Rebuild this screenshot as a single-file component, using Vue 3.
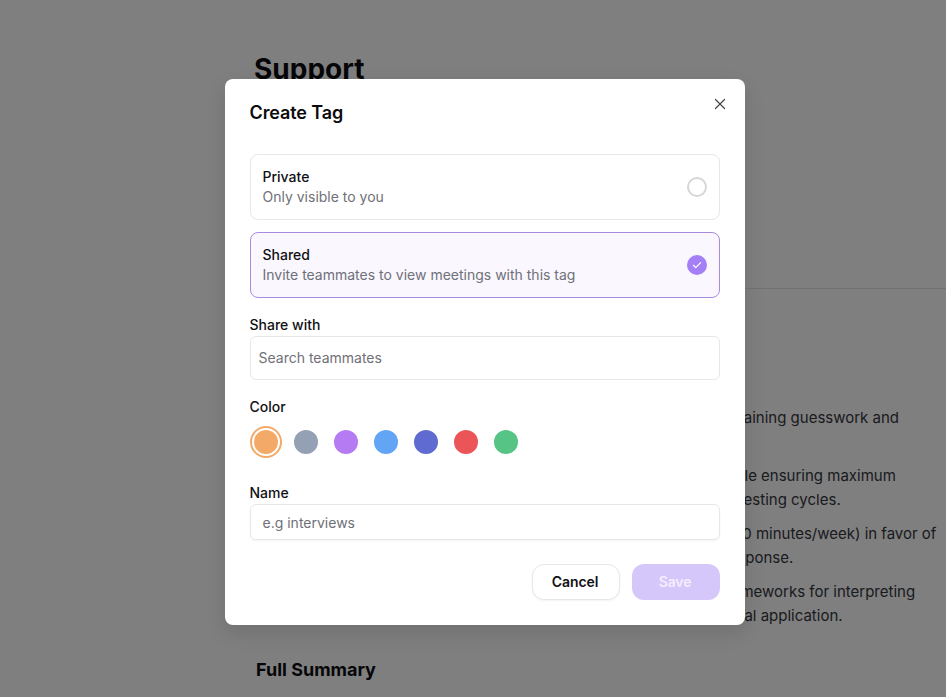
<script setup>
const options = [
  { title: 'Private', desc: 'Only visible to you', selected: false },
  { title: 'Shared', desc: 'Invite teammates to view meetings with this tag', selected: true },
]
const colors = ['#f3aa68', '#94a0b4', '#b57bf3', '#62a5f5', '#5f6bd0', '#ec5558', '#55c484']
const bullets = [
  ['Define the hiring criteria before the first interview starts, so constraining guesswork and'],
  ['Shorten each stage of the interview process for all candidates while ensuring maximum', 'signal for the entire team, and so avoid repeating long and costly testing cycles.'],
  ['Reduce the time that engineers spend on screening calls (under 30 minutes/week) in favor of', 'async reviews of written work by the whole panel, and a faster response.'],
  ['Give the interviewers a shared set of clear scoring rubrics and frameworks for interpreting', 'the results of every specific interview round, with notes on practical application.'],
]
</script>

<template>
  <div class="page">
    <h1 class="page-title">Support</h1>
    <hr class="rule" />
    <ul class="bullets">
      <li v-for="(b, i) in bullets" :key="i">
        <div v-for="(l, j) in b" :key="j" class="line">{{ l }}</div>
      </li>
    </ul>
    <h2 class="summary">Full Summary</h2>
  </div>

  <div class="overlay">
    <div class="modal">
      <button class="close" aria-label="Close">
        <svg width="16" height="16" viewBox="0 0 16 16" fill="none" stroke="#444" stroke-width="1.2" stroke-linecap="round">
          <path d="M3.5 3.5 12.5 12.5M12.5 3.5 3.5 12.5" />
        </svg>
      </button>
      <h3 class="title">Create Tag</h3>

      <div class="options">
        <div v-for="o in options" :key="o.title" class="option" :class="{ selected: o.selected }">
          <div class="option-text">
            <div class="option-title">{{ o.title }}</div>
            <div class="option-desc">{{ o.desc }}</div>
          </div>
          <span v-if="o.selected" class="radio on">
            <svg width="12" height="12" viewBox="0 0 12 12" fill="none" stroke="#fff" stroke-width="1.2" stroke-linecap="round" stroke-linejoin="round">
              <path d="M2.4 6.3 4.8 8.6 9.6 3.6" />
            </svg>
          </span>
          <span v-else class="radio"></span>
        </div>
      </div>

      <div class="label share-label">Share with</div>
      <div class="input search">Search teammates</div>

      <div class="label color-label">Color</div>
      <div class="swatches">
        <span v-for="(c, i) in colors" :key="c" class="swatch" :class="{ active: i === 0 }" :style="{ color: c }">
          <span class="dot"></span>
        </span>
      </div>

      <div class="label name-label">Name</div>
      <div class="input name">e.g interviews</div>

      <div class="actions">
        <button class="btn cancel">Cancel</button>
        <button class="btn save">Save</button>
      </div>
    </div>
  </div>
</template>

<style>
html, body { margin: 0; height: 100%; overflow: hidden; background: #fff; }
</style>

<style scoped>
.page {
  height: 697px;
  box-sizing: border-box;
  overflow: hidden;
  font-family: Inter, "Noto Sans", sans-serif;
  color: #1b1c20;
  padding-top: 52px;
}
.page-title {
  margin: 0 0 0 254px;
  font-size: 28px;
  line-height: 34px;
  font-weight: 700;
  color: #0c0d10;
}
.rule {
  border: 0;
  border-top: 1px solid #e4e4e7;
  margin: 202px 0 0 254px;
}
.bullets {
  list-style: none;
  margin: 117px 0 0 0;
  padding: 0 0 0 276px;
  font-size: 15px;
  line-height: 24px;
  color: #35363c;
  white-space: nowrap;
}
.bullets li { margin-bottom: 10px; }
.bullets li:first-child { margin-bottom: 34px; }
.summary {
  margin: 28px 0 0 256px;
  font-size: 18px;
  line-height: 28px;
  font-weight: 700;
  color: #0c0d10;
}
.overlay {
  position: absolute;
  inset: 0;
  background: rgba(0, 0, 0, 0.5);
  font-family: Inter, "Noto Sans", sans-serif;
}
.modal {
  position: absolute;
  left: 225px;
  top: 79px;
  width: 520px;
  height: 546px;
  box-sizing: border-box;
  padding: 22px 25px 25px;
  background: #fff;
  border-radius: 8px;
  box-shadow: 0 8px 20px rgba(0, 0, 0, 0.12);
}
.close {
  position: absolute;
  top: 17px;
  right: 17px;
  width: 16px;
  height: 16px;
  padding: 0;
  border: 0;
  background: none;
  display: flex;
}
.title {
  margin: 0 0 0 -0.5px;
  font-size: 18px;
  line-height: 24px;
  font-weight: 600;
  letter-spacing: -0.1px;
  color: #0b0b0d;
}
.options {
  display: flex;
  flex-direction: column;
  gap: 12px;
  margin-top: 29px;
}
.option {
  height: 66px;
  box-sizing: border-box;
  display: flex;
  align-items: center;
  justify-content: space-between;
  padding: 0 12px 0 11.5px;
  border: 1px solid #e7e7ea;
  border-radius: 8px;
}
.option.selected {
  background: #faf7ff;
  border-color: #a78bdc;
}
.option-title {
  font-size: 14px;
  line-height: 20px;
  font-weight: 500;
  color: #111114;
}
.option-desc {
  font-size: 14px;
  line-height: 20px;
  color: #6f7078;
}
.radio {
  width: 20px;
  height: 20px;
  box-sizing: border-box;
  border-radius: 50%;
  border: 2px solid #d6d6d8;
  display: flex;
  align-items: center;
  justify-content: center;
}
.radio.on {
  border: 0;
  background: #a47ff5;
}
.label {
  margin-left: -0.5px;
  font-size: 14px;
  line-height: 20px;
  font-weight: 500;
  color: #111114;
}
.share-label { margin-top: 17px; }
.input {
  box-sizing: border-box;
  margin-top: 1px;
  display: flex;
  align-items: center;
  border: 1px solid #e7e7ea;
  border-radius: 6px;
  font-size: 14px;
  color: #6f7078;
}
.search { height: 44px; padding: 0 0 2px 7.5px; margin-top: 1px; }
.color-label { margin-top: 17px; }
.swatches {
  display: flex;
  gap: 8px;
  margin-top: 9px;
}
.swatch {
  width: 32px;
  height: 32px;
  box-sizing: border-box;
  border-radius: 50%;
  display: flex;
  align-items: center;
  justify-content: center;
}
.swatch.active { border: 2px solid currentColor; }
.dot {
  width: 24px;
  height: 24px;
  border-radius: 50%;
  background: currentColor;
  flex: none;
}
.name-label { margin-top: 25px; }
.name { height: 36px; padding-left: 11.5px; box-shadow: 0 1px 2px rgba(0,0,0,.05); }
.actions {
  display: flex;
  justify-content: flex-end;
  gap: 12px;
  margin-top: 24px;
}
.btn {
  height: 36px;
  width: 88px;
  border-radius: 12px;
  font-family: inherit;
  font-size: 14px;
  font-weight: 600;
  letter-spacing: -0.1px;
  padding: 0 2px 2px 0;
}
.cancel {
  background: #fff;
  border: 1px solid #e7e7ea;
  color: #111114;
  box-shadow: 0 1px 2px rgba(0,0,0,.05);
}
.save {
  background: #d6c7fb;
  border: 0;
  color: #f3eeff;
}
</style>
